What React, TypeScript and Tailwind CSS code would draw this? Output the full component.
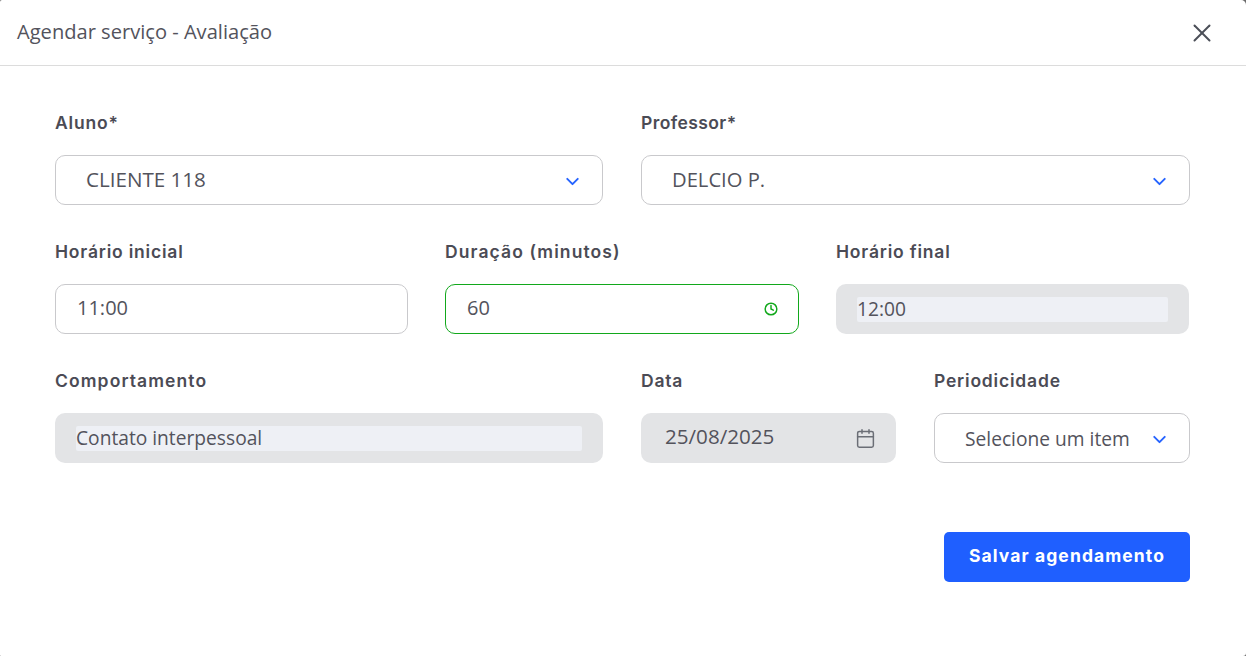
import { ChevronDown, Clock, Calendar, X } from 'lucide-react';
import type { ReactNode } from 'react';

const labelFont = "font-['Inter','Liberation_Sans',sans-serif]";

function Field({ label, className = '', spacing = 'tracking-[0.8px]', children }: { label: string; className?: string; spacing?: string; children: ReactNode }) {
  return (
    <div className={className}>
      <label className={`${labelFont} ${spacing} mb-[20px] block h-[24px] text-[17.5px] leading-[24px] font-semibold text-[#4b4b55]`}>
        {label}
      </label>
      {children}
    </div>
  );
}

function SelectBox({ value, size = 'text-[19.2px]', text = 'pt-[2px]' }: { value: string; size?: string; text?: string }) {
  return (
    <div className="flex h-[50px] items-center justify-between rounded-[10px] border border-[#c9c9cc] bg-white pr-[19px] pl-[30px]">
      <span className={`${size} ${text}`}>{value}</span>
      <ChevronDown size={21} strokeWidth={2.2} className="mt-[2px] text-[#2563ff]" />
    </div>
  );
}

function ReadOnly({ value }: { value: string }) {
  return (
    <div className="flex h-[50px] items-center rounded-[10px] bg-[#e3e4e6] px-[21px]">
      <div className="h-[25px] w-full rounded-[2px] bg-[#eef0f5] text-[19.2px] leading-[23px]">{value}</div>
    </div>
  );
}

export default function App() {
  return (
    <div className="h-[656px] w-[1246px] overflow-hidden bg-[#6b6b6b]">
      <div className="h-full rounded-tl-[2px] rounded-tr-[5px] rounded-br-[3px] rounded-bl-[1px] bg-white font-['Open_Sans','Noto_Sans',sans-serif] text-[#53535c]">
        <header className="flex h-[66px] items-center justify-between border-b border-[#dcdcdc] pr-[29px] pl-[17px]">
          <h1 className="pb-[1px] text-[20.1px] font-normal">Agendar serviço - Avaliação</h1>
          <X size={30} strokeWidth={1.6} className="text-[#4b4f58]" />
        </header>

        <main className="px-[55px] pt-[45px]">
          <div className="grid grid-cols-[548px_549px] gap-x-[38px]">
            <Field label="Aluno*">
              <SelectBox value="CLIENTE 118" size="text-[20.6px]" text="pb-[1px]" />
            </Field>
            <Field label="Professor*" spacing="tracking-[0.4px]">
              <SelectBox value="DELCIO P." size="text-[20.2px]" text="pb-[1px]" />
            </Field>
          </div>

          <div className="mt-[35px] grid grid-cols-[353px_354px_353px] gap-x-[37px]">
            <Field label="Horário inicial">
              <div className="flex h-[50px] items-center rounded-[10px] border border-[#c9c9cc] bg-white pb-[2px] pl-[21px] text-[20px]">
                11:00
              </div>
            </Field>
            <Field label="Duração (minutos)" spacing="tracking-[1.1px]">
              <div className="flex h-[50px] items-center justify-between rounded-[10px] border border-[#12a81c] bg-white pr-[20px] pb-[2px] pl-[21px] text-[20px]">
                60
                <Clock size={14} strokeWidth={2.5} className="mt-[2px] text-[#12a81c]" />
              </div>
            </Field>
            <Field label="Horário final">
              <ReadOnly value="12:00" />
            </Field>
          </div>

          <div className="mt-[35px] flex gap-x-[38px]">
            <Field label="Comportamento" spacing="tracking-[1.1px]" className="w-[548px]">
              <ReadOnly value="Contato interpessoal" />
            </Field>
            <Field label="Data" className="w-[255px]">
              <div className="flex h-[50px] items-center justify-between rounded-[10px] bg-[#e3e4e6] pr-[20px] pl-[24px] text-[20.6px]">
                <span className="pb-[3px]">25/08/2025</span>
                <Calendar size={21} strokeWidth={1.7} className="text-[#6b6e76]" />
              </div>
            </Field>
            <Field label="Periodicidade" className="w-[256px]">
              <SelectBox value="Selecione um item" />
            </Field>
          </div>

          <div className="mt-[69px] flex justify-end">
            <button className={`${labelFont} mr-[1px] h-[50px] w-[246px] rounded-[5px] bg-[#1f5fff] pb-[1px] text-[17.5px] font-bold tracking-[1.1px] text-white`}>
              Salvar agendamento
            </button>
          </div>
        </main>
      </div>
    </div>
  );
}
